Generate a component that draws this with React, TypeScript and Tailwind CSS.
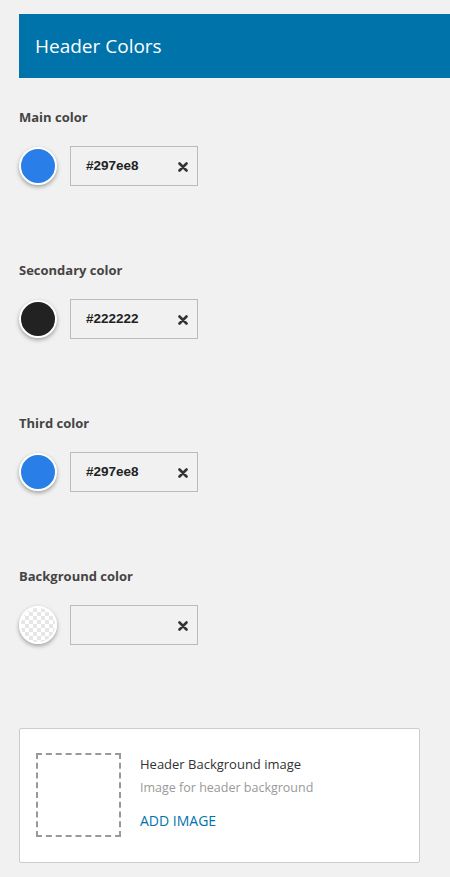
import React from "react";

interface ColorField {
    label: string;
    value: string; // "" means transparent
}

const fields: ColorField[] = [
    { label: "Main color", value: "#297ee8" },
    { label: "Secondary color", value: "#222222" },
    { label: "Third color", value: "#297ee8" },
    { label: "Background color", value: "" },
];

const checker =
    "bg-[conic-gradient(#e6e6e6_25%,#ffffff_0_50%,#e6e6e6_0_75%,#ffffff_0)] bg-[length:8px_8px]";

function Swatch({ value }: { value: string }) {
    return (
        <div
            className={`h-[38px] w-[38px] shrink-0 rounded-full border-2 border-white shadow-[0_2px_4px_rgba(0,0,0,0.35)] ${value ? "" : checker}`}
            style={value ? { backgroundColor: value } : undefined}
        />
    );
}

function ColorRow({ field }: { field: ColorField }) {
    return (
        <div className="h-[153px]">
            <div className="text-[13px] font-bold text-[#444] leading-none">{field.label}</div>
            <div className="mt-[22px] flex items-center gap-[13px]">
                <Swatch value={field.value} />
                <div className="flex h-[40px] w-[128px] items-center justify-between border border-[#bbb] pl-[15px] pr-[9px]">
                    <span className="font-['Liberation_Sans',Arial,sans-serif] text-[13.5px] font-bold text-[#222]">
                        {field.value}
                    </span>
                    <svg width="10" height="10" viewBox="0 0 10 10" className="mt-[1px]">
                        <path d="M1.5 1.5L8.5 8.5M8.5 1.5L1.5 8.5" stroke="#333" strokeWidth="2.6" strokeLinecap="round" />
                    </svg>
                </div>
            </div>
        </div>
    );
}

export default function App() {
    return (
        <div className="min-h-[877px] w-[450px] overflow-hidden bg-[#f1f1f1] pt-[14px] font-['Open_Sans','Noto_Sans',sans-serif]">
            <div className="ml-[19px] flex h-[64px] items-center bg-[#0073aa] pl-[16px]">
                <h1 className="text-[19px] font-normal text-white">Header Colors</h1>
            </div>
            <div className="px-[19px] pt-[33px]">
                {fields.map((f) => (
                    <ColorRow key={f.label} field={f} />
                ))}
                <div className="mt-[5px] flex h-[135px] w-[401px] gap-[19px] rounded-[2px] border border-[#ccc] bg-white pl-[16px] pt-[24px]">
                    <div className="h-[84px] w-[85px] shrink-0 border-2 border-dashed border-[#999]" />
                    <div className="pt-[2px]">
                        <div className="text-[13px] text-[#333]">Header Background image</div>
                        <div className="mt-[4px] text-[12.5px] text-[#999]">Image for header background</div>
                        <div className="mt-[13px] text-[14px] text-[#0073aa]">ADD IMAGE</div>
                    </div>
                </div>
            </div>
        </div>
    );
}
